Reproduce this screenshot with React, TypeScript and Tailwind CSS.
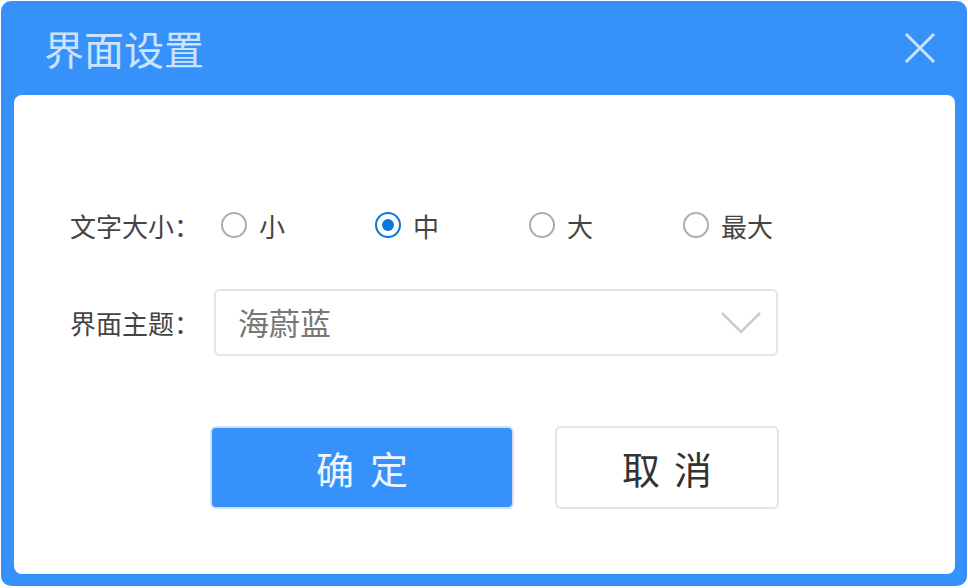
import { useState } from "react";

const sizes = ["小", "中", "大", "最大"];

function Radio({ checked }: { checked: boolean }) {
  return checked ? (
    <span className="flex h-[26px] w-[26px] items-center justify-center rounded-full border-2 border-[#0b78dc]">
      <span className="h-[12px] w-[12px] rounded-full bg-[#0b78dc]" />
    </span>
  ) : (
    <span className="h-[26px] w-[26px] rounded-full border-2 border-[#acacb2]" />
  );
}

export default function App() {
  const [size, setSize] = useState("中");

  return (
    <div
      className="h-[588px] w-[968px] bg-white pl-px pt-px"
      style={{ fontFamily: '"Noto Sans CJK SC", "Microsoft YaHei", sans-serif' }}
    >
      <div className="flex h-[585px] w-[966px] flex-col rounded-[10px] bg-[#3692fa]">
        {/* Header */}
        <div className="flex h-[94px] shrink-0 items-center justify-between pl-[43px] pr-[31px]">
          <h1 className="text-[40px] leading-none text-[#cbe3fd]">界面设置</h1>
          <svg width="32" height="32" viewBox="0 0 32 32" className="text-[#cbe3fd]">
            <path d="M2 2 L30 30 M30 2 L2 30" stroke="currentColor" strokeWidth="3" fill="none" />
          </svg>
        </div>

        {/* Body */}
        <div className="mb-[12px] ml-[13px] mr-[12px] flex flex-1 flex-col rounded-[8px] bg-white pl-[56px] pt-[110px]">
          <div className="flex h-[40px] items-center">
            <span className="w-[151px] text-[26px] text-[#444]">文字大小：</span>
            {sizes.map((s) => (
              <button
                key={s}
                onClick={() => setSize(s)}
                className="flex w-[154px] items-center gap-[12px] text-[26px] text-[#444]"
              >
                <Radio checked={size === s} />
                <span>{s}</span>
              </button>
            ))}
          </div>

          <div className="mt-[44px] flex items-center">
            <span className="w-[144px] text-[26px] text-[#444]">界面主题：</span>
            <div className="flex h-[67px] w-[564px] items-center justify-between rounded-[6px] border-2 border-[#e3e3e8] pl-[22px] pr-[15px]">
              <span className="text-[31px] text-[#777]">海蔚蓝</span>
              <svg width="40" height="24" viewBox="0 0 40 24">
                <path d="M1 2 L20 21 L39 2" stroke="#cdcdcd" strokeWidth="2.5" fill="none" />
              </svg>
            </div>
          </div>

          <div className="mt-[70px] flex gap-[41px] pl-[140px]">
            <button className="h-[83px] w-[304px] rounded-[6px] border-2 border-[#d4e0f2] bg-[#3692fa] text-[38px] tracking-[16px] text-[#eef5ff]">
              <span className="pl-[16px]">确定</span>
            </button>
            <button className="h-[83px] w-[224px] rounded-[6px] border-2 border-[#e3e3ea] bg-white text-[38px] tracking-[14px] text-[#333]">
              <span className="pl-[14px]">取消</span>
            </button>
          </div>
        </div>
      </div>
    </div>
  );
}
